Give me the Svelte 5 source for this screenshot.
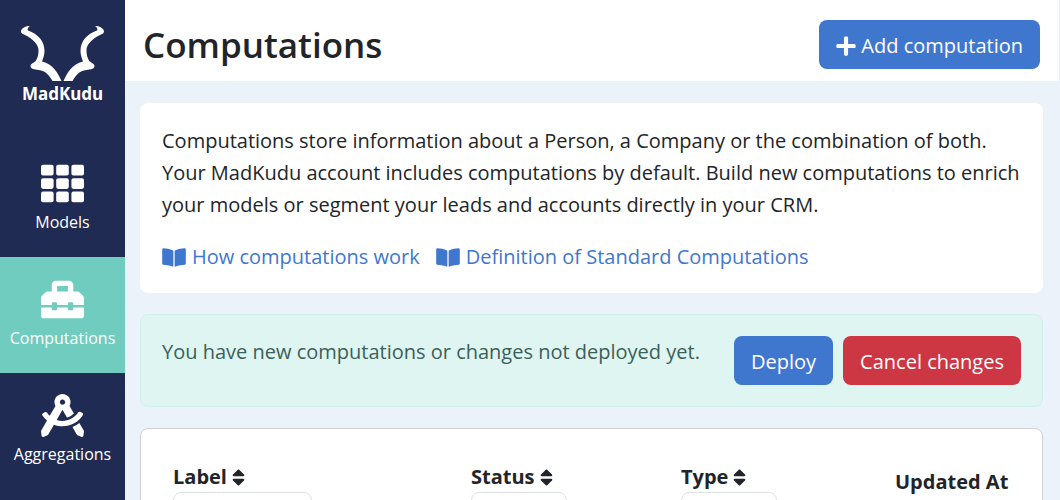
<script lang="ts">
    type Filter = 'text' | 'select' | null;

    const navItems = [
        { id: 'models', label: 'Models' },
        { id: 'computations', label: 'Computations' },
        { id: 'aggregations', label: 'Aggregations' },
    ];

    const docs = ['How computations work', 'Definition of Standard Computations'];

    const columns: { id: string; label: string; filter: Filter; options: string[] }[] = [
        { id: 'label', label: 'Label', filter: 'text', options: [] },
        { id: 'status', label: 'Status', filter: 'select', options: ['Live', 'Draft'] },
        { id: 'type', label: 'Type', filter: 'select', options: ['Person', 'Company'] },
        { id: 'updated', label: 'Updated At', filter: null, options: [] },
    ];

    let active = $state('computations');
    let hasChanges = $state(true);
    let sortBy = $state('');
</script>

{#snippet navIcon(id: string)}
    <svg class="nav-icon" viewBox="0 0 512 512" aria-hidden="true">
        {#if id === 'models'}
            {#each [32, 192, 352] as y}
                {#each [0, 181, 362] as x}
                    <rect {x} {y} width="150" height="128" rx="24" />
                {/each}
            {/each}
        {:else if id === 'computations'}
            <path d="M502.63 214.63l-45.25-45.25c-6-6-14.14-9.37-22.63-9.37H384V80c0-26.51-21.49-48-48-48H176c-26.51 0-48 21.49-48 48v80H77.25c-8.49 0-16.62 3.37-22.63 9.37L9.37 214.63c-6 6-9.37 14.14-9.37 22.63V320h128v-16c0-8.84 7.16-16 16-16h32c8.84 0 16 7.16 16 16v16h128v-16c0-8.84 7.16-16 16-16h32c8.84 0 16 7.16 16 16v16h128v-82.75c0-8.48-3.37-16.62-9.37-22.62zM320 160H192V96h128v64zm64 208c0 8.84-7.16 16-16 16h-32c-8.84 0-16-7.16-16-16v-16H192v16c0 8.84-7.16 16-16 16h-32c-8.84 0-16-7.16-16-16v-16H0v96c0 17.67 14.33 32 32 32h448c17.67 0 32-14.33 32-32v-96H384v16z" />
        {:else}
            <path d="M457.01 344.42c-25.05 20.33-52.63 37.18-82.54 49.05l54.38 94.19 53.95 23.04c9.81 4.19 20.89-2.21 22.17-12.8l7.02-58.25-54.98-95.23zm42.49-94.56c4.86-7.67 1.89-17.99-6.05-22.39l-28.07-15.57c-7.48-4.15-16.61-1.46-21.26 5.72C403.01 281.15 332.25 320 256 320c-23.93 0-47.23-4.25-69.41-11.53l67.36-116.68c.7.02 1.34.21 2.04.21s1.35-.19 2.04-.21l51.09 88.5c31.23-8.96 59.56-25.75 82.61-48.92l-51.79-89.71C347.39 128.03 352 112.63 352 96c0-53.02-42.98-96-96-96s-96 42.98-96 96c0 16.63 4.61 32.03 12.05 45.66l-68.3 118.31c-12.55-11.61-23.96-24.59-33.68-39-4.79-7.1-13.97-9.62-21.38-5.33l-27.75 16.07c-7.85 4.54-10.63 14.9-5.64 22.47 15.57 23.64 34.69 44.21 55.98 62.02L0 439.66l7.02 58.25c1.28 10.59 12.36 16.99 22.17 12.8l53.95-23.04 70.8-122.63C186.13 377.28 220.62 384 256 384c99.05 0 190.88-51.01 243.5-134.14zM256 64c17.67 0 32 14.33 32 32s-14.33 32-32 32-32-14.33-32-32 14.33-32 32-32z" />
        {/if}
    </svg>
{/snippet}

<div class="app">
    <nav class="sidebar">
        <a class="logo" href="#home">
            <svg class="logo-mark" viewBox="0 0 83 55" aria-hidden="true">
                <path id="horn" d="M9 0C5 0 0 2 0 5.500c0 2 2 2.500 4 3.500C12 13 18 19 17.500 25c0 4-1 7-2.500 9.500c-1 2-5.500 3-5.500 5.500c0 3 4 3.500 8 4C25 45 28 49 31.500 55H40.500C37 47 32 38 21 35.500C22 33 23.500 29 23.500 25C23.500 15 17 8 7 4.500C6 3.500 7 1 9 0z" />
                <use href="#horn" transform="matrix(-1 0 0 1 83 0)" />
            </svg>
            <span>MadKudu</span>
        </a>
        {#each navItems as item}
            <a
                class="nav-item"
                class:nav-item--active={active === item.id}
                href="#{item.id}"
                onclick={() => (active = item.id)}
            >
                {@render navIcon(item.id)}
                <span>{item.label}</span>
            </a>
        {/each}
    </nav>

    <div class="page">
        <header class="header">
            <h1>Computations</h1>
            <button class="btn btn--primary">
                <svg class="plus" viewBox="0 0 448 512" aria-hidden="true">
                    <path d="M416 208H272V64c0-17.67-14.33-32-32-32h-32c-17.67 0-32 14.33-32 32v144H32c-17.67 0-32 14.33-32 32v32c0 17.67 14.33 32 32 32h144v144c0 17.67 14.33 32 32 32h32c17.67 0 32-14.33 32-32V304h144c17.67 0 32-14.33 32-32v-32c0-17.67-14.33-32-32-32z" />
                </svg>
                Add computation
            </button>
        </header>

        <main class="content">
            <section class="card">
                <p>
                    Computations store information about a Person, a Company or the combination of both.<br />
                    Your MadKudu account includes computations by default. Build new computations to enrich
                    your models or segment your leads and accounts directly in your CRM.
                </p>
                <div class="docs">
                    {#each docs as doc}
                        <a href="#docs">
                            <svg class="book" viewBox="0 0 576 512" aria-hidden="true">
                                <path d="M542.22 32.05c-54.8 3.11-163.72 14.43-230.96 55.59-4.64 2.84-7.27 7.89-7.27 13.17v363.87c0 11.55 12.63 18.85 23.28 13.49 69.18-34.82 169.23-44.32 218.7-46.92 16.89-.89 30.02-14.43 30.02-30.66V62.75c.01-17.71-15.35-31.74-33.77-30.7zM264.73 87.64C197.5 46.48 88.58 35.17 33.78 32.05 15.36 31.01 0 45.04 0 62.75V400.6c0 16.24 13.13 29.78 30.02 30.66 49.49 2.6 149.59 12.11 218.77 46.95 10.62 5.35 23.21-1.94 23.21-13.46V100.63c0-5.29-2.62-10.14-7.27-12.99z" />
                            </svg>
                            {doc}
                        </a>
                    {/each}
                </div>
            </section>

            {#if hasChanges}
                <section class="card card--notice">
                    <p>You have new computations or changes not deployed yet.</p>
                    <div class="actions">
                        <button class="btn btn--primary" onclick={() => (hasChanges = false)}>Deploy</button>
                        <button class="btn btn--danger" onclick={() => (hasChanges = false)}>Cancel changes</button>
                    </div>
                </section>
            {/if}

            <section class="card card--table">
                <table>
                    <thead>
                        <tr>
                            {#each columns as col}
                                <th class="col-{col.id}" scope="col">
                                    {#if col.filter}
                                        <button class="sort" onclick={() => (sortBy = col.id)}>
                                            {col.label}
                                            <svg class="sort-icon" viewBox="0 0 320 512" aria-hidden="true">
                                                <path d="M41 288h238c21.4 0 32.1 25.9 17 41L177 448c-9.4 9.4-24.6 9.4-33.9 0L24 329c-15.1-15.1-4.4-41 17-41zm255-105L177 64c-9.4-9.4-24.6-9.4-33.9 0L24 183c-15.1 15.1-4.4 41 17 41h238c21.4 0 32.1-25.9 17-41z" />
                                            </svg>
                                        </button>
                                    {:else}
                                        {col.label}
                                    {/if}
                                    {#if col.filter === 'text'}
                                        <input class="filter" type="text" aria-label="Filter by {col.label}" />
                                    {:else if col.filter === 'select'}
                                        <select class="filter" aria-label="Filter by {col.label}">
                                            <option value=""></option>
                                            {#each col.options as option}
                                                <option>{option}</option>
                                            {/each}
                                        </select>
                                    {/if}
                                </th>
                            {/each}
                        </tr>
                    </thead>
                </table>
            </section>
        </main>
    </div>
</div>

<style>
    :global(body) {
        margin: 0;
        background: #ebf2fa;
    }

    .app {
        display: flex;
        height: 100vh;
        overflow: hidden;
        font-family: 'Open Sans', 'Noto Sans', sans-serif;
        font-size: 20px;
        line-height: 32px;
        color: #212529;
    }

    a {
        color: #4077ce;
        text-decoration: none;
    }

    svg {
        fill: currentColor;
    }

    p {
        margin: 0;
    }

    .sidebar {
        flex: 0 0 125px;
        background: #1f2b53;
    }

    .logo {
        display: flex;
        flex-direction: column;
        align-items: center;
        box-sizing: border-box;
        height: 141px;
        padding-top: 26px;
        color: #fff;
        font-family: 'Noto Sans', sans-serif;
        font-size: 17px;
        font-weight: 700;
        line-height: 26px;
    }

    .logo-mark {
        width: 83px;
        height: 55px;
    }

    .nav-item {
        display: flex;
        flex-direction: column;
        align-items: center;
        gap: 5px;
        box-sizing: border-box;
        height: 116px;
        padding-top: 21px;
        color: #fff;
        font-size: 16px;
        line-height: 24px;
    }

    .nav-item--active {
        background: #6fccbe;
    }

    .nav-icon {
        width: 43px;
        height: 43px;
    }

    .page {
        flex: 1;
        min-width: 0;
        border-right: 1px solid #ebf2fa;
    }

    .header {
        display: flex;
        align-items: center;
        justify-content: space-between;
        padding: 16px 19px 8px 18px;
        background: #fff;
    }

    h1 {
        margin: 0;
        font-size: 35px;
        font-weight: 600;
        line-height: 57px;
    }

    .btn {
        display: flex;
        align-items: center;
        gap: 5px;
        height: 49px;
        padding: 2px 17px 0;
        border: none;
        border-radius: 8px;
        color: #fff;
        font: inherit;
        cursor: pointer;
    }

    .btn--primary {
        background: #4077ce;
    }

    .btn--danger {
        background: #cd3643;
    }

    .plus {
        width: 20px;
        height: 22px;
    }

    .content {
        display: flex;
        flex-direction: column;
        gap: 21px;
        padding: 22px 16px 21px 15px;
    }

    .card {
        padding: 22px 22px 20px;
        border-radius: 8px;
        background: #fff;
    }

    .docs {
        display: flex;
        gap: 16px;
        margin-top: 20px;
    }

    .docs a {
        display: flex;
        align-items: center;
        gap: 6px;
    }

    .book {
        width: 24px;
        height: 21px;
    }

    .card--notice {
        display: flex;
        justify-content: space-between;
        padding: 21px;
        border: 1px solid #cff1ea;
        background: #def5f1;
        color: #3c5f59;
    }

    .actions {
        display: flex;
        gap: 10px;
    }

    .card--table {
        padding: 21px;
        border: 1px solid #cfd1d4;
    }

    table {
        width: 100%;
        border-collapse: collapse;
        table-layout: fixed;
    }

    th {
        padding: 12px 11px;
        text-align: left;
        vertical-align: top;
        font-weight: 700;
    }

    .col-label {
        width: 276px;
    }

    .col-status {
        width: 188px;
    }

    .col-type {
        width: 192px;
    }

    .col-updated {
        padding-top: 16px;
        white-space: nowrap;
    }

    .sort {
        display: flex;
        align-items: center;
        gap: 5px;
        padding: 0;
        border: none;
        background: none;
        color: inherit;
        font: inherit;
        line-height: 30px;
        cursor: pointer;
    }

    .sort-icon {
        width: 13px;
        height: 21px;
    }

    .filter {
        display: block;
        box-sizing: border-box;
        width: 96px;
        height: 40px;
        border: 1px solid #dee2e6;
        border-radius: 8px;
        background: #fff;
        font: inherit;
    }

    .col-label .filter {
        width: 139px;
    }
</style>
